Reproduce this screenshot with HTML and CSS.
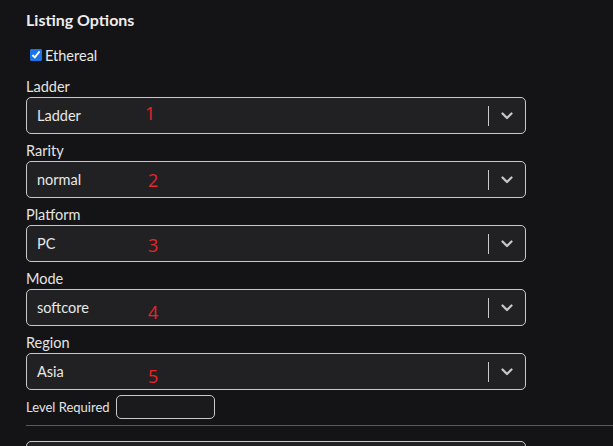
FILE: index.html
```html
<!DOCTYPE html>
<html>
<head>
<meta charset="utf-8">
<link rel="stylesheet" href="styles.css">
</head>
<body>
<div class="panel">
  <h2 class="title">Listing Options</h2>
  <label class="check"><input type="checkbox" checked><span>Ethereal</span></label>

  <div class="field">
    <div class="label">Ladder</div>
    <div class="select">
      <span class="value">Ladder</span>
      <span class="ind"><span class="sep"></span><svg class="chev" viewBox="0 0 12 8" width="12" height="8"><path d="M1.5 1.5 L6 6 L10.5 1.5" fill="none" stroke="#c9c9c9" stroke-width="2.2" stroke-linecap="round" stroke-linejoin="round"/></svg></span>
      <span class="num n1">1</span>
    </div>
  </div>

  <div class="field">
    <div class="label">Rarity</div>
    <div class="select">
      <span class="value">normal</span>
      <span class="ind"><span class="sep"></span><svg class="chev" viewBox="0 0 12 8" width="12" height="8"><path d="M1.5 1.5 L6 6 L10.5 1.5" fill="none" stroke="#c9c9c9" stroke-width="2.2" stroke-linecap="round" stroke-linejoin="round"/></svg></span>
      <span class="num n2">2</span>
    </div>
  </div>

  <div class="field">
    <div class="label">Platform</div>
    <div class="select">
      <span class="value">PC</span>
      <span class="ind"><span class="sep"></span><svg class="chev" viewBox="0 0 12 8" width="12" height="8"><path d="M1.5 1.5 L6 6 L10.5 1.5" fill="none" stroke="#c9c9c9" stroke-width="2.2" stroke-linecap="round" stroke-linejoin="round"/></svg></span>
      <span class="num n3">3</span>
    </div>
  </div>

  <div class="field">
    <div class="label">Mode</div>
    <div class="select">
      <span class="value">softcore</span>
      <span class="ind"><span class="sep"></span><svg class="chev" viewBox="0 0 12 8" width="12" height="8"><path d="M1.5 1.5 L6 6 L10.5 1.5" fill="none" stroke="#c9c9c9" stroke-width="2.2" stroke-linecap="round" stroke-linejoin="round"/></svg></span>
      <span class="num n4">4</span>
    </div>
  </div>

  <div class="field">
    <div class="label">Region</div>
    <div class="select">
      <span class="value">Asia</span>
      <span class="ind"><span class="sep"></span><svg class="chev" viewBox="0 0 12 8" width="12" height="8"><path d="M1.5 1.5 L6 6 L10.5 1.5" fill="none" stroke="#c9c9c9" stroke-width="2.2" stroke-linecap="round" stroke-linejoin="round"/></svg></span>
      <span class="num n5">5</span>
    </div>
  </div>

  <div class="level">
    <span class="level-label">Level Required</span>
    <span class="level-input"></span>
  </div>
  <div class="rule"></div>
  <div class="next"></div>
</div>
</body>
</html>
```

FILE: styles.css
```css
html, body {
  margin: 0;
  padding: 0;
  background: #141416;
  overflow: hidden;
}
body {
  font-family: Lato, "Open Sans", sans-serif;
  color: #e6e6e6;
  width: 613px;
  height: 446px;
}
.panel {
  padding: 10px 0 0 26px;
}
.title {
  margin: 0;
  font-size: 16px;
  line-height: 20px;
  font-weight: 700;
  color: #ececec;
}
.check {
  display: flex;
  align-items: center;
  margin-top: 15px;
  margin-bottom: 12px;
  margin-left: 4px;
  height: 20px;
  font-size: 14.5px;
  color: #e8e8e8;
}
.check input {
  margin: 0 3px 0 0;
  width: 12px;
  height: 12px;
  accent-color: #1a73e8;
}
.field {
  margin-top: 7px;
}
.label {
  font-size: 14.5px;
  line-height: 20px;
  height: 20px;
  color: #e4e4e4;
}
.select {
  position: relative;
  box-sizing: border-box;
  width: 500px;
  height: 37px;
  border: 1px solid #c9c9c9;
  border-radius: 5px;
  background: #212124;
  display: flex;
  align-items: center;
  justify-content: space-between;
  padding-left: 10px;
}
.value {
  font-size: 14.5px;
  color: #e8e8e8;
}
.ind {
  display: flex;
  align-items: center;
  height: 100%;
}
.sep {
  width: 1px;
  height: 20px;
  background: #c9c9c9;
}
.chev {
  margin: 0 12px 0 12px;
  display: block;
}
.num {
  position: absolute;
  color: #e8242a;
  font-family: "Open Sans", sans-serif;
  font-size: 18px;
  line-height: 20px;
}
.n1 { left: 118px; top: 5px; }
.n2 { left: 121px; top: 8px; }
.n3 { left: 121px; top: 9px; }
.n4 { left: 121px; top: 12px; }
.n5 { left: 121px; top: 12px; }
.level {
  display: flex;
  align-items: center;
  margin-top: 5px;
  height: 24px;
}
.level-label {
  font-size: 13px;
  color: #e4e4e4;
  margin-right: 6px;
}
.level-input {
  box-sizing: border-box;
  width: 99px;
  height: 24px;
  border: 1px solid #c9c9c9;
  border-radius: 5px;
  background: #1a1a1d;
}
.rule {
  margin-top: 6px;
  height: 1px;
  background: #5a5a5c;
  width: 600px;
}
.next {
  margin-top: 15px;
  box-sizing: border-box;
  width: 500px;
  height: 37px;
  border: 1px solid #c9c9c9;
  border-radius: 5px;
  background: #212124;
}
```
